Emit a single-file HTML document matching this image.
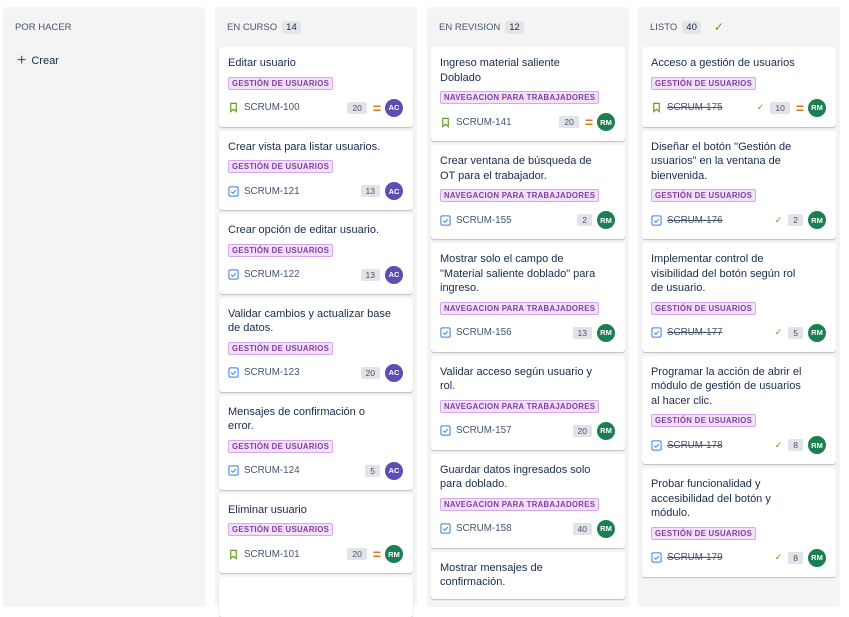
<!DOCTYPE html>
<html><head><meta charset="utf-8"><style>
*{box-sizing:border-box;margin:0;padding:0}
body{width:849px;height:580px;overflow:hidden;background:#fff;font-family:"Liberation Sans",sans-serif;color:#172b4d;position:relative}
.col{position:absolute;top:7px;width:202px;height:600px;background:#f4f4f5;border-radius:4px;padding:0 4px}
.hd{height:40px;display:flex;align-items:center;padding-left:8px;font-size:9.5px;color:#44546f;gap:5px}
.cnt{background:#e4e5e8;border-radius:3px;padding:1px 4px;font-size:9.5px;color:#172b4d}
.card{background:#fff;border-radius:3px;box-shadow:0 1px 1px rgba(9,30,66,.25);margin-bottom:4px;padding:9px 10px 9px 9px}
.t{font-size:11px;line-height:14.5px;color:#172b4d}
.tag{display:block;width:fit-content;margin-top:6px;height:13px;line-height:11px;font-size:7.8px;font-weight:bold;color:#803fa5;background:#f3e0fa;border:1px solid #d5a7ee;border-radius:2px;padding:0 3px;letter-spacing:.3px}
.ft{margin-top:8px;height:20px;display:flex;align-items:center;font-size:9.8px;color:#44546f}
.k{margin-left:5px;flex:1}
.done .k{text-decoration:line-through}
.est{background:#e2e3e6;border-radius:2px;font-size:8.5px;padding:1px 5px;color:#44546f;margin-right:5px}
.pr{color:#e2740f;font-size:14px;font-weight:bold;margin:0 4px 0 1px;line-height:10px}
.av{width:18px;height:18px;border-radius:50%;color:#fff;font-size:7.5px;font-weight:bold;display:flex;align-items:center;justify-content:center}
.ac{background:#5e4db2}.rm{background:#1c7f50}
.ck{color:#6a9a23;font-size:9px;margin-right:6px}
</style></head><body>
<svg width="0" height="0" style="position:absolute"><defs>
<symbol id="bm" viewBox="0 0 12 12"><path d="M3 1.5h6v9L6 8 3 10.5z" fill="none" stroke="#6a9a23" stroke-width="1.3"/></symbol>
<symbol id="tk" viewBox="0 0 12 12"><rect x="1" y="1" width="10" height="10" rx="1.5" fill="none" stroke="#357de8" stroke-width="1.1"/><path d="M3.5 6.2l1.8 1.8 3.3-3.6" fill="none" stroke="#357de8" stroke-width="1.1"/></symbol>
</defs></svg>

<div class="col" style="left:3px"><div class="hd">POR HACER</div>
<div style="padding:8px 10px;font-size:11px;display:flex;align-items:center;gap:5px;color:#172b4d"><span style="font-size:16px;line-height:10px;color:#44546f">+</span>Crear</div></div>

<div class="col" style="left:215px"><div class="hd">EN CURSO <span class="cnt">14</span></div>
<div class="card"><div class="t">Editar usuario</div><span class="tag">GESTIÓN DE USUARIOS</span><div class="ft"><svg width="11" height="11"><use href="#bm"/></svg><span class="k">SCRUM-100</span><span class="est">20</span><span class="pr">=</span><span class="av ac">AC</span></div></div>
<div class="card"><div class="t">Crear vista para listar usuarios.</div><span class="tag">GESTIÓN DE USUARIOS</span><div class="ft"><svg width="11" height="11"><use href="#tk"/></svg><span class="k">SCRUM-121</span><span class="est">13</span><span class="av ac">AC</span></div></div>
<div class="card"><div class="t">Crear opción de editar usuario.</div><span class="tag">GESTIÓN DE USUARIOS</span><div class="ft"><svg width="11" height="11"><use href="#tk"/></svg><span class="k">SCRUM-122</span><span class="est">13</span><span class="av ac">AC</span></div></div>
<div class="card"><div class="t">Validar cambios y actualizar base<br>de datos.</div><span class="tag">GESTIÓN DE USUARIOS</span><div class="ft"><svg width="11" height="11"><use href="#tk"/></svg><span class="k">SCRUM-123</span><span class="est">20</span><span class="av ac">AC</span></div></div>
<div class="card"><div class="t">Mensajes de confirmación o<br>error.</div><span class="tag">GESTIÓN DE USUARIOS</span><div class="ft"><svg width="11" height="11"><use href="#tk"/></svg><span class="k">SCRUM-124</span><span class="est">5</span><span class="av ac">AC</span></div></div>
<div class="card"><div class="t">Eliminar usuario</div><span class="tag">GESTIÓN DE USUARIOS</span><div class="ft"><svg width="11" height="11"><use href="#bm"/></svg><span class="k">SCRUM-101</span><span class="est">20</span><span class="pr">=</span><span class="av rm">RM</span></div></div>
<div class="card" style="height:40px"></div>
</div>

<div class="col" style="left:427px"><div class="hd">EN REVISION <span class="cnt">12</span></div>
<div class="card"><div class="t">Ingreso material saliente<br>Doblado</div><span class="tag">NAVEGACION PARA TRABAJADORES</span><div class="ft"><svg width="11" height="11"><use href="#bm"/></svg><span class="k">SCRUM-141</span><span class="est">20</span><span class="pr">=</span><span class="av rm">RM</span></div></div>
<div class="card"><div class="t">Crear ventana de búsqueda de<br>OT para el trabajador.</div><span class="tag">NAVEGACION PARA TRABAJADORES</span><div class="ft"><svg width="11" height="11"><use href="#tk"/></svg><span class="k">SCRUM-155</span><span class="est">2</span><span class="av rm">RM</span></div></div>
<div class="card"><div class="t">Mostrar solo el campo de<br>"Material saliente doblado" para<br>ingreso.</div><span class="tag">NAVEGACION PARA TRABAJADORES</span><div class="ft"><svg width="11" height="11"><use href="#tk"/></svg><span class="k">SCRUM-156</span><span class="est">13</span><span class="av rm">RM</span></div></div>
<div class="card"><div class="t">Validar acceso según usuario y<br>rol.</div><span class="tag">NAVEGACION PARA TRABAJADORES</span><div class="ft"><svg width="11" height="11"><use href="#tk"/></svg><span class="k">SCRUM-157</span><span class="est">20</span><span class="av rm">RM</span></div></div>
<div class="card"><div class="t">Guardar datos ingresados solo<br>para doblado.</div><span class="tag">NAVEGACION PARA TRABAJADORES</span><div class="ft"><svg width="11" height="11"><use href="#tk"/></svg><span class="k">SCRUM-158</span><span class="est">40</span><span class="av rm">RM</span></div></div>
<div class="card"><div class="t">Mostrar mensajes de<br>confirmación.</div></div>
</div>

<div class="col" style="left:638px"><div class="hd">LISTO <span class="cnt">40</span><span style="color:#6a9a23;font-size:12px;margin-left:8px">✓</span></div>
<div class="card done"><div class="t">Acceso a gestión de usuarios</div><span class="tag">GESTIÓN DE USUARIOS</span><div class="ft"><svg width="11" height="11"><use href="#bm"/></svg><span class="k">SCRUM-175</span><span class="ck">✓</span><span class="est">10</span><span class="pr">=</span><span class="av rm">RM</span></div></div>
<div class="card done"><div class="t">Diseñar el botón "Gestión de<br>usuarios" en la ventana de<br>bienvenida.</div><span class="tag">GESTIÓN DE USUARIOS</span><div class="ft"><svg width="11" height="11"><use href="#tk"/></svg><span class="k">SCRUM-176</span><span class="ck">✓</span><span class="est">2</span><span class="av rm">RM</span></div></div>
<div class="card done"><div class="t">Implementar control de<br>visibilidad del botón según rol<br>de usuario.</div><span class="tag">GESTIÓN DE USUARIOS</span><div class="ft"><svg width="11" height="11"><use href="#tk"/></svg><span class="k">SCRUM-177</span><span class="ck">✓</span><span class="est">5</span><span class="av rm">RM</span></div></div>
<div class="card done"><div class="t">Programar la acción de abrir el<br>módulo de gestión de usuarios<br>al hacer clic.</div><span class="tag">GESTIÓN DE USUARIOS</span><div class="ft"><svg width="11" height="11"><use href="#tk"/></svg><span class="k">SCRUM-178</span><span class="ck">✓</span><span class="est">8</span><span class="av rm">RM</span></div></div>
<div class="card done"><div class="t">Probar funcionalidad y<br>accesibilidad del botón y<br>módulo.</div><span class="tag">GESTIÓN DE USUARIOS</span><div class="ft"><svg width="11" height="11"><use href="#tk"/></svg><span class="k">SCRUM-179</span><span class="ck">✓</span><span class="est">8</span><span class="av rm">RM</span></div></div>
</div>
</body></html>
